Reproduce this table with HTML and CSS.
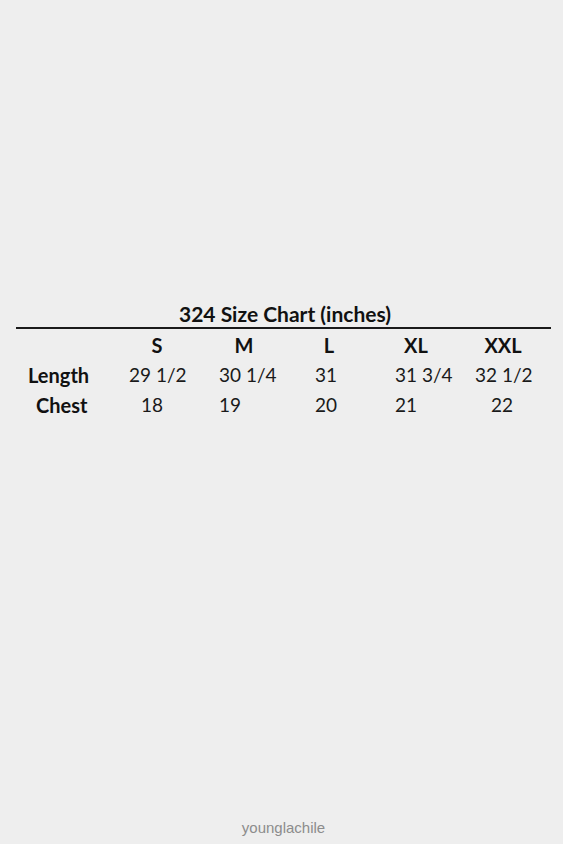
FILE: index.html
```html
<!DOCTYPE html>
<html lang="en">
<head>
<meta charset="utf-8">
<title>324 Size Chart</title>
<link rel="stylesheet" href="styles.css">
</head>
<body>
<div class="page">
  <section class="chart">
    <h1 class="chart-title">324 Size Chart (inches)</h1>
    <div class="grid">
      <div class="cell"></div>
      <div class="cell head head-s">S</div>
      <div class="cell head head-m">M</div>
      <div class="cell head head-l">L</div>
      <div class="cell head head-xl">XL</div>
      <div class="cell head head-xxl">XXL</div>

      <div class="cell label label-length">Length</div>
      <div class="cell">29 1/2</div>
      <div class="cell">30 1/4</div>
      <div class="cell">31</div>
      <div class="cell">31 3/4</div>
      <div class="cell">32 1/2</div>

      <div class="cell label label-chest">Chest</div>
      <div class="cell pad-s">18</div>
      <div class="cell">19</div>
      <div class="cell">20</div>
      <div class="cell">21</div>
      <div class="cell pad-xxl">22</div>
    </div>
  </section>
  <footer class="brand">younglachile</footer>
</div>
</body>
</html>
```
FILE: styles.css
```css
html, body {
  margin: 0;
  padding: 0;
}
body {
  background: #eeeeee;
  color: #111;
  font-family: Lato, "Open Sans", sans-serif;
}
.page {
  height: 844px;
  display: flex;
  flex-direction: column;
  box-sizing: border-box;
  padding: 300px 12px 0 16px;
}
.chart {
  width: 535px;
}
.chart-title {
  margin: 0;
  font-size: 21px;
  font-weight: 700;
  line-height: 27px;
  text-align: center;
  border-bottom: 2px solid #1a1a1a;
  padding-left: 3px;
}
.grid {
  display: grid;
  grid-template-columns: 113px 90px 96px 80px 80px 76px;
  grid-auto-rows: 30px;
  margin-top: 1px;
  font-size: 19px;
  line-height: 30px;
  color: #1a1a1a;
}
.cell {
  white-space: nowrap;
}
.head {
  font-weight: 700;
  font-size: 20px;
  text-align: center;
  color: #111;
}
.head-s { width: 56px; }
.head-m { width: 50px; }
.head-l { width: 28px; }
.head-xl { width: 42px; }
.head-xxl { width: 56px; }
.label {
  font-weight: 700;
  font-size: 20px;
  color: #111;
}
.label-length { padding-left: 12px; }
.label-chest { padding-left: 20px; }
.pad-s { padding-left: 12px; }
.pad-xxl { padding-left: 16px; }
.brand {
  margin-top: auto;
  text-align: center;
  font-family: "Liberation Sans", Arial, sans-serif;
  font-size: 15px;
  color: #8c8c8c;
  line-height: 30px;
  padding-bottom: 1px;
}
```
